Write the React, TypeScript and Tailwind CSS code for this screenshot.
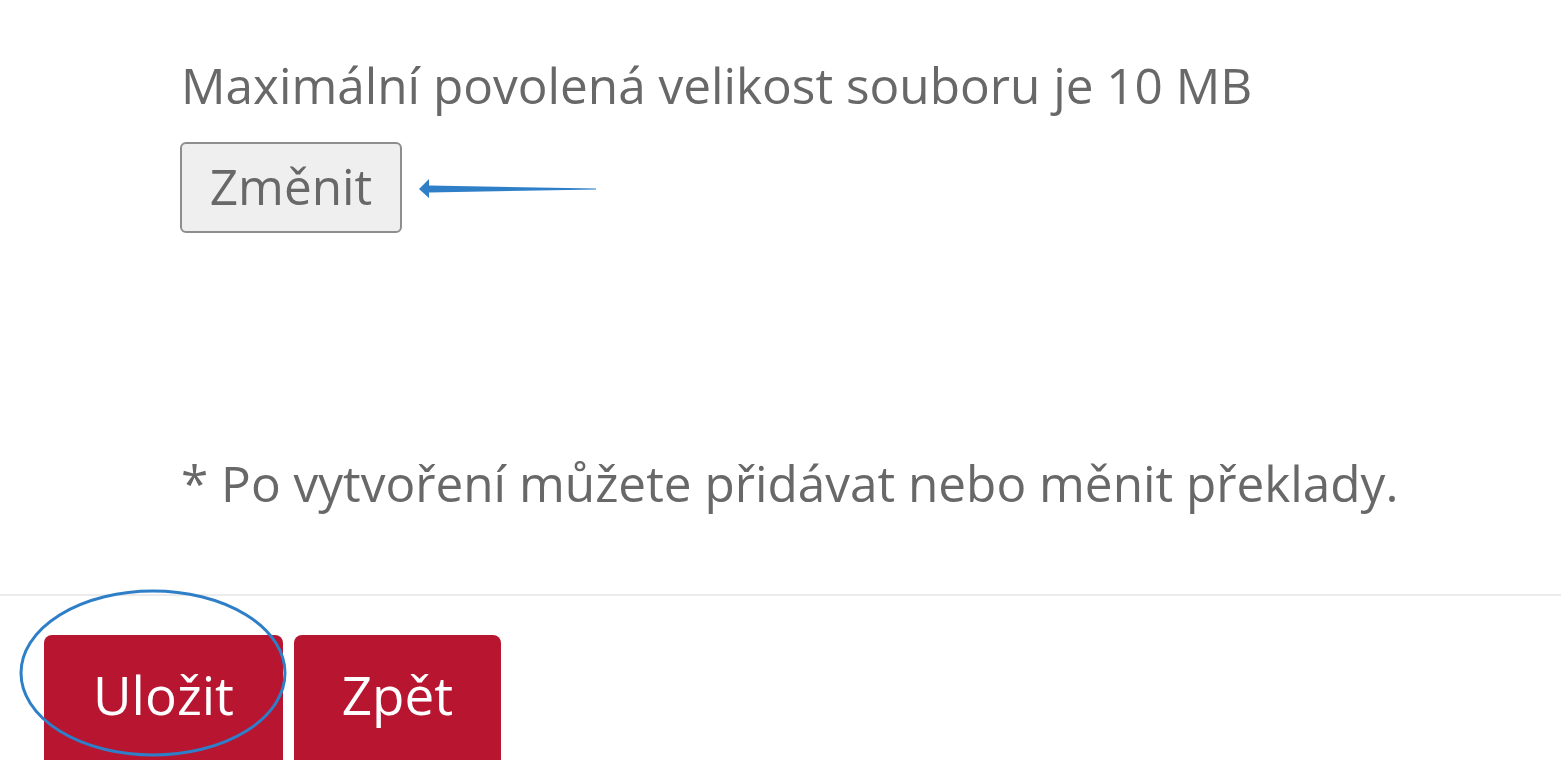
import React from 'react'

const font = { fontFamily: '"Open Sans", "Liberation Sans", sans-serif' }

function ArrowLeft() {
  return (
    <svg width="180" height="24" viewBox="0 0 180 24" className="block">
      <polygon
        points="0,12 10,2 10,8.5 177,11.5 177,12.5 10,15.5 10,21"
        fill="#2e7fc8"
      />
    </svg>
  )
}

export default function App() {
  return (
    <div className="relative w-full h-[760px] overflow-hidden bg-white" style={font}>
      {/* Upload section */}
      <div className="pl-[181px] pt-[53px] text-[#686868]">
        <p className="text-[49.5px] leading-[64px]">Maximální povolená velikost souboru je 10 MB</p>

        <div className="mt-[25px] flex items-center">
          <button
            type="button"
            className="h-[91px] w-[222px] ml-[-1px] border-2 border-[#8e8e8e] rounded-[6px] bg-[#efefef] text-[49.5px] leading-[64px] text-[#686868] pb-[4px]"
          >
            Změnit
          </button>
          <div className="ml-[17px] mt-[2px]">
            <ArrowLeft />
          </div>
        </div>

        <p className="mt-[218px] text-[49.5px] leading-[64px]">
          * Po vytvoření můžete přidávat nebo měnit překlady.
        </p>
      </div>

      {/* Footer */}
      <div className="mt-[79px] border-t-2 border-[#ebebeb]">
        <div className="flex gap-[11px] pl-[44px] pt-[39px]">
          <button
            type="button"
            className="h-[140px] w-[239px] pt-[25px] rounded-[8px] bg-[#b81530] text-white text-[53px] leading-[70px] flex justify-center items-start"
          >
            Uložit
          </button>
          <button
            type="button"
            className="h-[140px] w-[207px] pt-[25px] rounded-[8px] bg-[#b81530] text-white text-[53px] leading-[70px] flex justify-center items-start"
          >
            Zpět
          </button>
        </div>
      </div>

      {/* Annotation ring */}
      <svg
        className="absolute left-0 top-0 pointer-events-none"
        width="1561"
        height="760"
        viewBox="0 0 1561 760"
      >
        <ellipse cx="153" cy="673" rx="132" ry="82" fill="none" stroke="#2e7fc8" strokeWidth="3" />
      </svg>
    </div>
  )
}
